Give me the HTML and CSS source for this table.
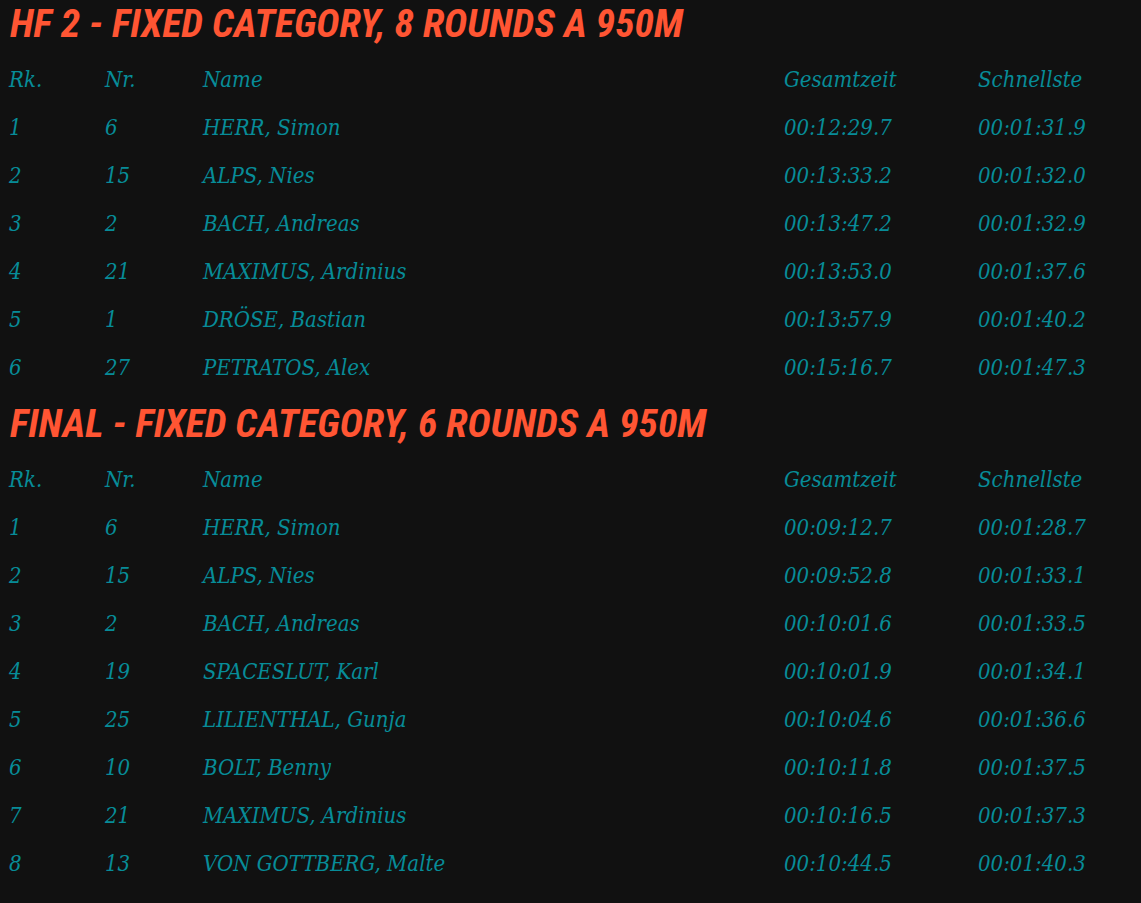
FILE: index.html
```html
<!DOCTYPE html>
<html lang="de">
<head>
<meta charset="utf-8">
<title>Ergebnisse</title>
<link rel="stylesheet" href="styles.css">
</head>
<body>
<section class="race">
  <h2 class="race-title">HF 2 - FIXED CATEGORY, 8 ROUNDS A 950M</h2>
  <div class="results">
    <div class="row head"><span>Rk.</span><span>Nr.</span><span>Name</span><span>Gesamtzeit</span><span>Schnellste</span></div>
    <div class="row"><span>1</span><span>6</span><span>HERR, Simon</span><span>00:12:29.7</span><span>00:01:31.9</span></div>
    <div class="row"><span>2</span><span>15</span><span>ALPS, Nies</span><span>00:13:33.2</span><span>00:01:32.0</span></div>
    <div class="row"><span>3</span><span>2</span><span>BACH, Andreas</span><span>00:13:47.2</span><span>00:01:32.9</span></div>
    <div class="row"><span>4</span><span>21</span><span>MAXIMUS, Ardinius</span><span>00:13:53.0</span><span>00:01:37.6</span></div>
    <div class="row"><span>5</span><span>1</span><span>DRÖSE, Bastian</span><span>00:13:57.9</span><span>00:01:40.2</span></div>
    <div class="row"><span>6</span><span>27</span><span>PETRATOS, Alex</span><span>00:15:16.7</span><span>00:01:47.3</span></div>
  </div>
</section>
<section class="race">
  <h2 class="race-title">FINAL - FIXED CATEGORY, 6 ROUNDS A 950M</h2>
  <div class="results">
    <div class="row head"><span>Rk.</span><span>Nr.</span><span>Name</span><span>Gesamtzeit</span><span>Schnellste</span></div>
    <div class="row"><span>1</span><span>6</span><span>HERR, Simon</span><span>00:09:12.7</span><span>00:01:28.7</span></div>
    <div class="row"><span>2</span><span>15</span><span>ALPS, Nies</span><span>00:09:52.8</span><span>00:01:33.1</span></div>
    <div class="row"><span>3</span><span>2</span><span>BACH, Andreas</span><span>00:10:01.6</span><span>00:01:33.5</span></div>
    <div class="row"><span>4</span><span>19</span><span>SPACESLUT, Karl</span><span>00:10:01.9</span><span>00:01:34.1</span></div>
    <div class="row"><span>5</span><span>25</span><span>LILIENTHAL, Gunja</span><span>00:10:04.6</span><span>00:01:36.6</span></div>
    <div class="row"><span>6</span><span>10</span><span>BOLT, Benny</span><span>00:10:11.8</span><span>00:01:37.5</span></div>
    <div class="row"><span>7</span><span>21</span><span>MAXIMUS, Ardinius</span><span>00:10:16.5</span><span>00:01:37.3</span></div>
    <div class="row"><span>8</span><span>13</span><span>VON GOTTBERG, Malte</span><span>00:10:44.5</span><span>00:01:40.3</span></div>
  </div>
</section>
</body>
</html>
```
FILE: styles.css
```css
html, body {
  background: #111111;
}
body {
  margin: 0;
  padding: 0 9px;
}
.race-title {
  margin: 0;
  padding-left: 1px;
  height: 48px;
  line-height: 48px;
  font-family: "Roboto Condensed", "Roboto", sans-serif;
  font-stretch: condensed;
  font-style: italic;
  font-weight: 700;
  font-size: 39.5px;
  color: #ff5533;
}
.results {
  padding-top: 7px;
}
.row {
  display: grid;
  grid-template-columns: 96px 97px 582px 194px 1fr;
  height: 48px;
  align-items: center;
  font-family: "DejaVu Serif Condensed", "DejaVu Serif", serif;
  font-style: italic;
  font-size: 22px;
  color: #078c98;
}
.row span:nth-child(3) {
  padding-left: 1px;
}
.race + .race {
  margin-top: 9px;
}
```
